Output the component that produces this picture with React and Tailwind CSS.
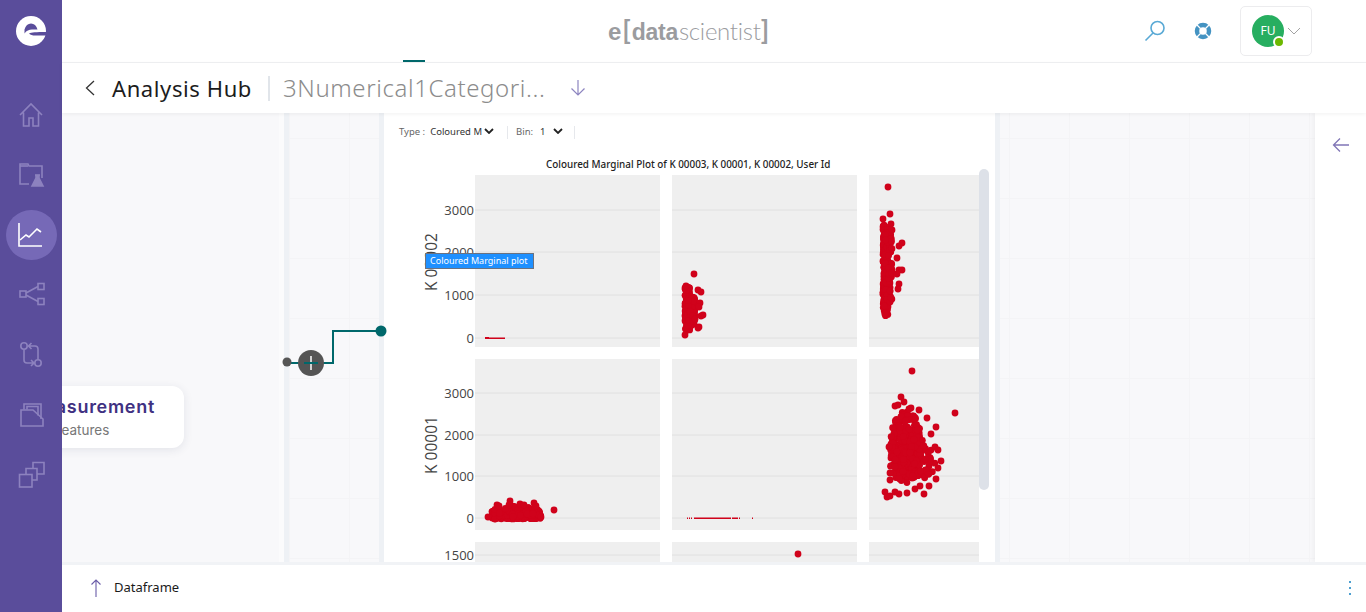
import React from 'react';

// seeded random so the scatter stays the same on each load
function makeRandom(seed) {
  let s = seed;
  return () => {
    s = (s * 16807) % 2147483647;
    return (s - 1) / 2147483646;
  };
}

function blob(seed, count, cx, cy, rx, ry) {
  const rand = makeRandom(seed);
  const dots = [];
  for (let i = 0; i < count; i++) {
    const a = rand() * Math.PI * 2;
    const r = Math.sqrt(rand());
    dots.push([cx + Math.cos(a) * r * rx, cy + Math.sin(a) * r * ry]);
  }
  return dots;
}

function box(seed, count, x1, x2, y1, y2) {
  const rand = makeRandom(seed);
  const dots = [];
  for (let i = 0; i < count; i++) {
    dots.push([x1 + rand() * (x2 - x1), y1 + rand() * (y2 - y1)]);
  }
  return dots;
}

const r1c2 = [
  ...box(11, 120, 685, 690, 287, 330),
  ...box(12, 70, 688, 695, 296, 326),
  [694, 274], [698, 290], [701, 292], [700, 303], [699, 307], [703, 315], [701, 316], [699, 327], [698, 328], [685, 335], [686, 286],
];
const r1c3 = [
  ...box(21, 200, 883, 888, 225, 316),
  ...box(22, 70, 885, 892, 232, 300),
  [888, 187], [890, 214], [883, 219], [891, 224], [892, 230], [902, 243], [899, 246], [897, 258], [899, 270], [902, 270], [897, 274],
  [899, 284], [898, 289], [890, 302], [891, 298],
];
const r2c1 = [
  ...box(31, 280, 492, 541, 511, 519),
  ...blob(32, 90, 516, 512, 24, 6),
  [497, 505], [499, 506], [510, 501], [509, 505], [520, 504], [524, 505], [534, 503], [536, 506], [488, 517], [541, 517], [554, 510],
];
const r2c3 = [
  ...blob(41, 250, 906, 447, 16, 36),
  ...blob(42, 70, 918, 460, 17, 22),
  ...blob(43, 30, 898, 465, 8, 15),
  [912, 371], [955, 413], [901, 397], [895, 406], [898, 405], [904, 402], [885, 492], [887, 497], [890, 496], [895, 492], [899, 494],
  [907, 493], [924, 494], [936, 479], [938, 468], [941, 461], [890, 473], [890, 480], [929, 486], [936, 427], [931, 434], [927, 418],
  [919, 410], [911, 408], [909, 409], [889, 447], [935, 447], [938, 450], [915, 489], [920, 486],
];

function Plot({ x, y, w, h, lines, dots = [], children }) {
  return (
    <svg width={w} height={h} viewBox={`${x} ${y} ${w} ${h}`} className="shrink-0 bg-[#efefef]">
      {lines.map((ly) => (
        <line key={ly} x1={x} x2={x + w} y1={ly} y2={ly} stroke="#e0e0e0" strokeWidth="1" />
      ))}
      {dots.map(([cx, cy], i) => (
        <circle key={i} cx={cx} cy={cy} r="3.4" fill="#d0021b" />
      ))}
      {children}
    </svg>
  );
}

function Axis({ y, h, ticks, title, titleY }) {
  return (
    <svg width="91" height={h} viewBox={`384 ${y} 91 ${h}`} className="shrink-0">
      {title && (
        <text
          x="437"
          y={titleY}
          fontSize="15.500"
          fill="#444"
          textAnchor="middle"
          fontFamily="'Open Sans', sans-serif"
          transform={`rotate(-90 437 ${titleY})`}
        >
          {title}
        </text>
      )}
      {ticks.map(([label, ty]) => (
        <text key={label} x="474" y={ty + 4.5} fontSize="13" fill="#444" textAnchor="end" fontFamily="'Open Sans', sans-serif">
          {label}
        </text>
      ))}
    </svg>
  );
}

function NavIcon({ children }) {
  return (
    <svg width="30" height="30" viewBox="0 0 30 30" fill="none" stroke="#8d82bf" strokeWidth="1.6">
      {children}
    </svg>
  );
}

const navIcons = [
  <NavIcon key="home">
    <path d="M4 15 15 4l11 11M7.500 12.500V26h5.500v-8h4v8h5.500V12.500" />
  </NavIcon>,
  <NavIcon key="lab">
    <path d="M13 24H4V4h8l1 2h13v12" />
    <path d="M4 6h8" />
    <path d="M20 15v3l-4 8h11l-4-8v-3" fill="#8d82bf" />
    <path d="M19 15h5" />
  </NavIcon>,
  null,
  <NavIcon key="nodes">
    <rect x="4" y="11" width="6" height="6" />
    <rect x="22" y="3.500" width="6" height="6" />
    <rect x="22" y="18.500" width="6" height="6" />
    <path d="M10 13 22 6.500M10 15 22 21.500" />
  </NavIcon>,
  <NavIcon key="flow">
    <circle cx="8" cy="6" r="3.200" />
    <circle cx="22" cy="23" r="3.200" />
    <path d="M8 9.500V20q0 3 3 3h7M15 20l3 3-3 3M22 19.500V9q0-3-3-3h-6M15.500 3l-3 3 3 3" />
  </NavIcon>,
  <NavIcon key="stack">
    <path d="M8 9.500V4h17v15" />
    <path d="M11 9.500V6.500h11v9" />
    <path d="M5 26V10h12l10 9v7z" />
  </NavIcon>,
  <NavIcon key="copy">
    <rect x="3.500" y="14.500" width="12.500" height="12.500" />
    <path d="M10 14.500V8.500h11V20h-5" />
    <path d="M17 8.500V2.500h11V14h-7" />
  </NavIcon>,
];

function Sidebar() {
  return (
    <aside className="flex h-full w-[62px] shrink-0 flex-col items-center bg-[#5a4d9b]">
      <svg width="32" height="32" viewBox="0 0 32 32" className="mt-[15px]">
        <circle cx="16" cy="16" r="15" fill="#fff" />
        <path d="M9.500 14.500C10.500 10.500 13 8.500 16 8.500s5.500 2 6.500 6H17c-3 0-5.500 1-7.500 4z" fill="#5a4d9b" />
        <path d="M14 18.500c3-1.200 6-1.500 18-1.500v3.500H20c-2.500 0-4.500-.5-6-2z" fill="#5a4d9b" />
      </svg>
      <div className="mt-[53px] flex flex-col items-center gap-[30px]">
        {navIcons.map((icon, i) =>
          icon ? (
            <div key={i} className="flex h-[30px] w-[30px] items-center justify-center">
              {icon}
            </div>
          ) : (
            <div key={i} className="-my-[10px] flex h-[50px] w-[51px] items-center justify-center rounded-full bg-[#7669b7]">
              <svg width="28" height="28" viewBox="0 0 28 28" fill="none" stroke="#fff" strokeWidth="1.6">
                <path d="M2 2v23h23" />
                <path d="M3 19l6-5 3 2 8-8 4 3" />
              </svg>
            </div>
          )
        )}
      </div>
    </aside>
  );
}

function TopBar() {
  return (
    <header className="relative flex h-[63px] shrink-0 items-center border-b border-[#f0f1f3] bg-white">
      <div className="absolute left-[341px] top-[60px] h-[2px] w-[22px] bg-[#00686b]" />
      <div className="absolute left-[546px] top-[12px] flex items-baseline text-[24px] leading-[36px] text-[#9b9c9f] font-['Liberation_Sans',sans-serif]">
        <span className="font-bold">e</span>
        <span className="ml-[1px] font-['Lato',sans-serif] text-[27px] font-bold">[</span>
        <span className="ml-[1px] text-[23px] font-bold tracking-[-0.3px]">data</span>
        <span className="ml-[1px] font-['Lato',sans-serif] font-light tracking-[-0.3px]">scientist</span>
        <span className="font-['Lato',sans-serif] text-[27px] font-bold">]</span>
      </div>
      <div className="ml-auto flex items-center">
        <svg width="24" height="24" viewBox="0 0 24 24" fill="none" stroke="#59a9d5" strokeWidth="1.6" className="mr-[27px]">
          <circle cx="14.500" cy="9" r="6.500" />
          <path d="M10 14 2.500 21.500" />
        </svg>
        <svg width="18" height="18" viewBox="0 0 18 18" fill="none" className="mr-[28px]">
          <circle cx="9" cy="9" r="6" stroke="#4493c2" strokeWidth="4.500" />
          <path d="M3 3l3.500 3.500M15 3l-3.500 3.500M3 15l3.500-3.500M15 15l-3.500-3.500" stroke="#fff" strokeWidth="1.300" />
        </svg>
        <div className="mr-[54px] flex h-[50px] w-[72px] items-center rounded-[5px] border border-[#ececee] pl-[11px]">
          <div className="relative flex h-[32px] w-[32px] items-center justify-center rounded-full bg-[#27ae60] font-['Noto_Sans',sans-serif] text-[12px] text-white">
            FU
            <span className="absolute -bottom-[1px] -right-[1px] h-[12px] w-[12px] rounded-full border-2 border-white bg-[#6cb800]" />
          </div>
          <svg width="14" height="8" viewBox="0 0 14 8" fill="none" stroke="#a3a3a3" strokeWidth="1" className="ml-[3px]">
            <path d="M1 1l6 6 6-6" />
          </svg>
        </div>
      </div>
    </header>
  );
}

function SubHeader() {
  return (
    <div className="relative z-10 flex h-[50px] shrink-0 items-center bg-white pl-[22px] shadow-[0_1px_4px_rgba(0,0,0,0.06)] font-['Noto_Sans',sans-serif]">
      <svg width="12" height="18" viewBox="0 0 12 18" fill="none" stroke="#333" strokeWidth="1.300">
        <path d="M10 2 2.500 9l7.500 7" />
      </svg>
      <span className="ml-[16px] text-[22px] tracking-[0.6px] text-[#1c1c1c]">Analysis Hub</span>
      <div className="ml-[16px] h-[25px] w-[2px] bg-[#e1e5ea]" />
      <span className="ml-[13px] text-[24px] tracking-[0.6px] text-[#8c8c8c] font-light">3Numerical1Categori...</span>
      <svg width="16" height="18" viewBox="0 0 16 18" fill="none" stroke="#8d85c0" strokeWidth="1.200" className="ml-[25px]">
        <path d="M8 1v15M1.500 9.500 8 16l6.500-6.500" />
      </svg>
    </div>
  );
}

function Chevron({ className }) {
  return (
    <svg width="10" height="6" viewBox="0 0 10 6" fill="none" stroke="#222" strokeWidth="1.800" className={className}>
      <path d="M1 1l4 4 4-4" />
    </svg>
  );
}

function PlotPanel() {
  return (
    <section className="relative h-full w-[611px] shrink-0 overflow-hidden bg-white font-['Noto_Sans',sans-serif]">
      <div className="mt-[12px] flex h-[14px] items-center pl-[15px] text-[9.500px]">
        <span className="text-[#666]">Type :</span>
        <span className="ml-[5px] text-[#333]">Coloured M</span>
        <Chevron className="ml-[2px] -mt-[2px]" />
        <div className="ml-[13px] h-[13px] w-px bg-[#e6e8ec]" />
        <span className="ml-[8px] text-[#666]">Bin:</span>
        <span className="ml-[7px] text-[#333]">1</span>
        <Chevron className="ml-[8px] -mt-[2px]" />
        <div className="ml-[11px] h-[13px] w-px bg-[#e6e8ec]" />
      </div>
      <h3 className="ml-[162px] mt-[17px] h-[16px] text-[9.900px] leading-[16px] font-medium text-[#222]">
        Coloured Marginal Plot of K 00003, K 00001, K 00002, User Id
      </h3>
      <div className="mt-[3px] flex flex-col gap-[12px]">
        <div className="flex h-[172px]">
          <Axis y={175} h={172} title="K 00002" titleY={262} ticks={[['3000', 210], ['2000', 252], ['1000', 295], ['0', 338]]} />
          <div className="flex gap-[12px]">
            <Plot x={475} y={175} w={185} h={172} lines={[210, 252, 295, 338]}>
              <rect x="485" y="337.500" width="20" height="1.500" fill="#d0021b" />
              <rect x="485" y="337" width="4" height="1" fill="#d0021b" />
            </Plot>
            <Plot x={672} y={175} w={185} h={172} lines={[210, 252, 295, 338]} dots={r1c2} />
            <Plot x={869} y={175} w={110} h={172} lines={[210, 252, 295, 338]} dots={r1c3} />
          </div>
        </div>
        <div className="flex h-[171px]">
          <Axis y={359} h={171} title="K 00001" titleY={445} ticks={[['3000', 393], ['2000', 435], ['1000', 476], ['0', 518]]} />
          <div className="flex gap-[12px]">
            <Plot x={475} y={359} w={185} h={171} lines={[393, 435, 476, 518]} dots={r2c1} />
            <Plot x={672} y={359} w={185} h={171} lines={[393, 435, 476, 518]}>
              {[[687, 1], [689, 1], [691, 1], [694, 37], [732, 6], [739, 1], [752, 1]].map(([sx, sw]) => (
                <rect key={sx} x={sx} y="517.500" width={sw} height="1.500" fill="#d0021b" />
              ))}
            </Plot>
            <Plot x={869} y={359} w={110} h={171} lines={[393, 435, 476, 518]} dots={r2c3} />
          </div>
        </div>
        <div className="flex h-[172px]">
          <Axis y={542} h={172} ticks={[['1500', 555]]} />
          <div className="flex gap-[12px]">
            <Plot x={475} y={542} w={185} h={172} lines={[555]} />
            <Plot x={672} y={542} w={185} h={172} lines={[555]} dots={[[798, 554]]} />
            <Plot x={869} y={542} w={110} h={172} lines={[555]} />
          </div>
        </div>
      </div>
      {/* scrollbar */}
      <div className="absolute left-[595px] top-[56px] h-[321px] w-[10px] rounded-[5px] bg-[#dde1e8]" />
      {/* hover tooltip */}
      <div className="absolute left-[41px] top-[140px] flex h-[16px] w-[109px] items-center border border-[#6b7280] bg-[#1e90ff] pl-[4px] text-[9px] text-white">
        Coloured Marginal plot
      </div>
    </section>
  );
}

function Canvas() {
  return (
    <main className="relative flex min-h-0 flex-1 overflow-hidden bg-[#f8f8fa]">
      <div className="w-[217px] shrink-0" />
      <div className="w-[5px] shrink-0 bg-[#fbfbfc]" />
      <div className="w-[5px] shrink-0 bg-[#eef1f5]" />
      <div className="w-[90px] shrink-0 bg-[linear-gradient(#f4f4f6_1px,transparent_1px),linear-gradient(90deg,#f4f4f6_1px,transparent_1px)] bg-[size:60px_60px] bg-[position:0px_25px]" />
      <div className="w-[5px] shrink-0 bg-[#eef1f5]" />
      <PlotPanel />
      <div className="w-[5px] shrink-0 bg-[#eef1f5]" />
      <div className="flex-1 bg-[linear-gradient(#f4f4f6_1px,transparent_1px),linear-gradient(90deg,#f4f4f6_1px,transparent_1px)] bg-[size:60px_60px] bg-[position:9px_25px]" />
      <div className="flex w-[51px] shrink-0 justify-center bg-white pt-[24px] shadow-[-2px_0_4px_rgba(0,0,0,0.04)]">
        <svg width="18" height="16" viewBox="0 0 18 16" fill="none" stroke="#8076b6" strokeWidth="1.300">
          <path d="M17 8H1.500M8 1.500 1.500 8 8 14.500" />
        </svg>
      </div>

      {/* node card, runs under the sidebar */}
      <div className="absolute -left-[38px] top-[273px] flex h-[62px] w-[160px] flex-col justify-center rounded-[12px] bg-white pl-[3px] shadow-[0_2px_10px_rgba(40,50,90,0.1)] font-['Inter',sans-serif]">
        <span className="text-[18px] leading-[26px] font-semibold tracking-[0.7px] text-[#3f3182]">Measurement</span>
        <span className="ml-[27px] text-[13.500px] leading-[20px] text-[#777]">Features</span>
      </div>

      {/* connector between the nodes */}
      <svg width="110" height="60" viewBox="280 320 110 60" className="absolute left-[218px] top-[207px]" fill="none">
        <path d="M287 363h46v-32h46" stroke="#00686b" strokeWidth="2" />
        <circle cx="287" cy="362" r="4.500" fill="#555" />
        <circle cx="311" cy="363" r="13" fill="#555" />
        <path d="M311 356v14" stroke="#fff" strokeWidth="1.500" />
        <path d="M304 363h14" stroke="#00686b" strokeWidth="2" />
        <path d="M324 363h9" stroke="#00686b" strokeWidth="2" />
        <circle cx="381" cy="331" r="5.500" fill="#00686b" />
      </svg>
    </main>
  );
}

function BottomBar() {
  return (
    <footer className="flex h-[50px] shrink-0 items-center border-t-[3px] border-[#f1f3f6] bg-white pb-[2px] pl-[28px] pr-[15px] font-['Noto_Sans',sans-serif]">
      <svg width="12" height="18" viewBox="0 0 12 18" fill="none" stroke="#6a5ca8" strokeWidth="1.100">
        <path d="M6 18V1M1.500 5.500 6 1l4.500 4.500" />
      </svg>
      <span className="ml-[12px] text-[13px] text-[#1a1a1a]">Dataframe</span>
      <div className="ml-auto flex flex-col gap-[4px]">
        <span className="h-[2px] w-[2px] bg-[#4d9fd0]" />
        <span className="h-[2px] w-[2px] bg-[#4d9fd0]" />
        <span className="h-[2px] w-[2px] bg-[#4d9fd0]" />
      </div>
    </footer>
  );
}

export default function App() {
  return (
    <div className="flex h-[612px] w-[1366px] overflow-hidden bg-white">
      <Sidebar />
      <div className="flex min-w-0 flex-1 flex-col">
        <TopBar />
        <SubHeader />
        <Canvas />
        <BottomBar />
      </div>
    </div>
  );
}
